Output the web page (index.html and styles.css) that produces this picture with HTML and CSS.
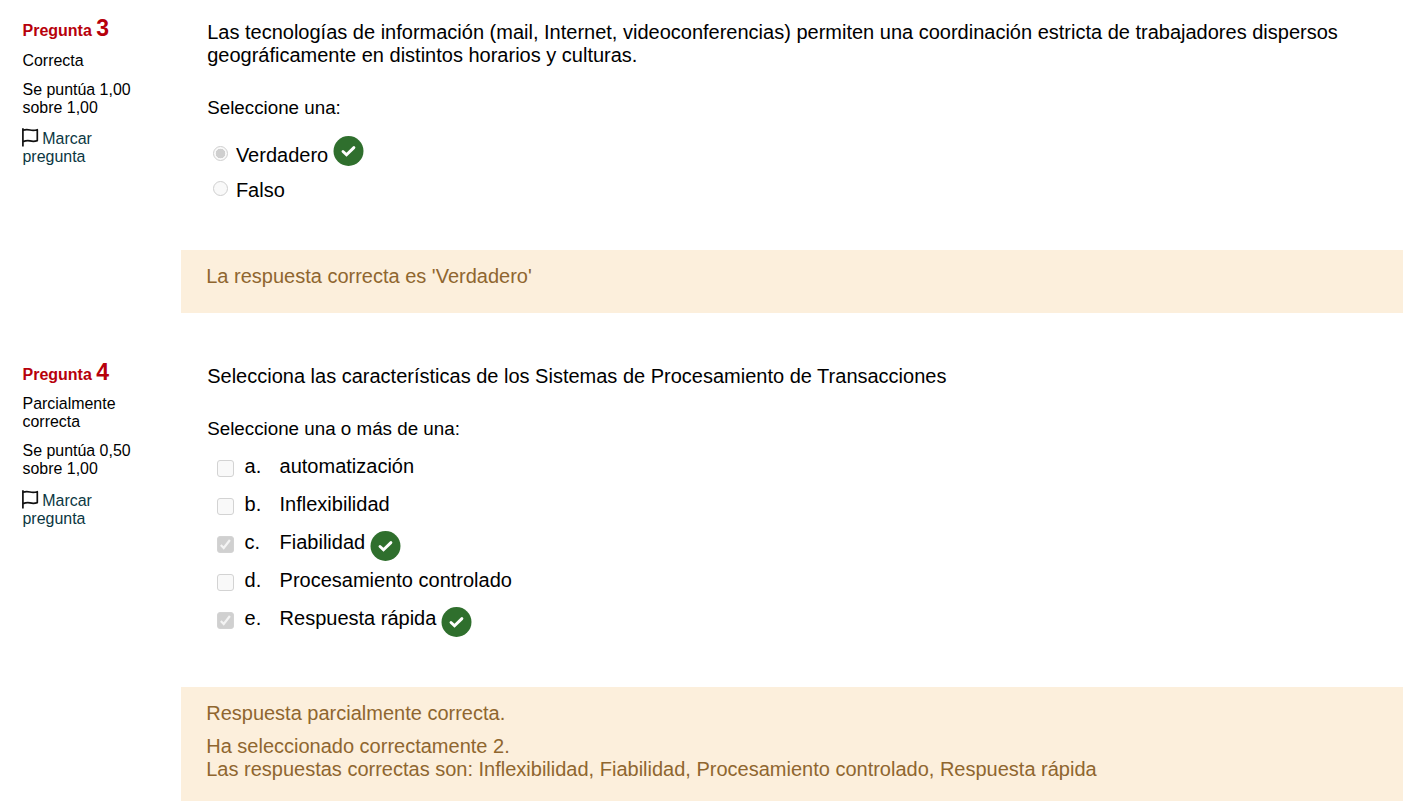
FILE: index.html
```html
<!DOCTYPE html>
<html lang="es">
<head>
<meta charset="utf-8">
<title>Cuestionario</title>
<link rel="stylesheet" href="styles.css">
</head>
<body>
<svg class="defs" width="0" height="0" aria-hidden="true">
  <symbol id="flag" viewBox="0 0 17 19"><path d="M.9 .3V18.4M1 2.3C3.5 1.3 5.6 1.4 8 2S13 2.5 15.3 1.7V12.6C12.8 13.6 10.6 13.6 8 12.9S3.4 12.7 1 13.6" fill="none" stroke="#111" stroke-width="1.7" stroke-linejoin="round"/></symbol>
  <symbol id="ok" viewBox="0 0 31 31"><circle cx="15.5" cy="15" r="15" fill="#2f6f2d"/><path d="M10 15.5l3.5 3.3 7.4-7.2" fill="none" stroke="#fff" stroke-width="2.9" stroke-linecap="round" stroke-linejoin="miter"/></symbol>
</svg>
<main class="quiz">
  <section class="question">
    <aside class="info">
      <h3 class="title">Pregunta <span class="number">3</span></h3>
      <p class="state single">Correcta</p>
      <p class="grade">Se puntúa 1,00<br>sobre 1,00</p>
      <a class="mark"><svg class="flag"><use href="#flag"/></svg>Marcar<br>pregunta</a>
    </aside>
    <div class="content">
      <div class="formulation">
        <p class="text">Las tecnologías de información (mail, Internet, videoconferencias) permiten una coordinación estricta de trabajadores dispersos<br>geográficamente en distintos horarios y culturas.</p>
        <p class="prompt">Seleccione una:</p>
        <div class="choices">
          <div class="choice"><span class="radio checked"></span><span>Verdadero</span><svg class="ok"><use href="#ok"/></svg></div>
          <div class="choice"><span class="radio"></span><span>Falso</span></div>
        </div>
      </div>
      <div class="feedback short"><p>La respuesta correcta es 'Verdadero'</p></div>
    </div>
  </section>
  <section class="question">
    <aside class="info">
      <h3 class="title">Pregunta <span class="number">4</span></h3>
      <p class="state">Parcialmente<br>correcta</p>
      <p class="grade">Se puntúa 0,50<br>sobre 1,00</p>
      <a class="mark later"><svg class="flag"><use href="#flag"/></svg>Marcar<br>pregunta</a>
    </aside>
    <div class="content">
      <div class="formulation multi">
        <p class="text">Selecciona las características de los Sistemas de Procesamiento de Transacciones</p>
        <p class="prompt">Seleccione una o más de una:</p>
        <div class="options">
          <div class="option"><span class="box"></span><span class="letter">a.</span><span>automatización</span></div>
          <div class="option"><span class="box"></span><span class="letter">b.</span><span>Inflexibilidad</span></div>
          <div class="option"><span class="box checked"><svg viewBox="0 0 15 15"><path d="M2.8 8l2.9 3 6.2-8"/></svg></span><span class="letter">c.</span><span>Fiabilidad</span><svg class="ok"><use href="#ok"/></svg></div>
          <div class="option"><span class="box"></span><span class="letter">d.</span><span>Procesamiento controlado</span></div>
          <div class="option"><span class="box checked"><svg viewBox="0 0 15 15"><path d="M2.8 8l2.9 3 6.2-8"/></svg></span><span class="letter">e.</span><span>Respuesta rápida</span><svg class="ok"><use href="#ok"/></svg></div>
        </div>
      </div>
      <div class="feedback long">
        <p>Respuesta parcialmente correcta.</p>
        <p>Ha seleccionado correctamente 2.<br>Las respuestas correctas son: Inflexibilidad, Fiabilidad, Procesamiento controlado, Respuesta rápida</p>
      </div>
    </div>
  </section>
</main>
</body>
</html>
```
FILE: styles.css
```css
* { box-sizing: border-box; }
body {
  margin: 0;
  height: 801px;
  overflow: hidden;
  background: #fff;
  color: #000;
  font: 20px/23px "Liberation Sans", Arial, sans-serif;
}
p, h3 { margin: 0; white-space: nowrap; }
.defs { display: block; height: 0; }
.quiz { padding: 0 13px 0 22px; }
.question { display: flex; height: 344px; }
.question + .question { height: 457px; }

.info { width: 159px; padding: 16px 0 0 0.5px; font-size: 15.95px; line-height: 18px; }
.title { height: 24px; line-height: 24px; font-size: 16px; font-weight: 700; color: #b7000b; }
.number { font-size: 23px; }
.state { margin-top: 11px; }
.single { margin-top: 12px; }
.grade { margin-top: 11px; }
.mark { display: block; margin-top: 13px; color: #0b3742; }
.later { margin-top: 14px; }
.flag { width: 17px; height: 19px; margin: -4px 3.3px -2px -0.5px; vertical-align: -1px; }

.content { flex: 1; }
.formulation { height: 249.5px; padding: 21px 0 0 26.2px; }
.multi { height: 342.5px; }
.prompt { margin-top: 29px; font-size: 18.8px; }
.choices { margin-top: 17px; }
.choice { display: flex; height: 35px; padding: 8px 0 0 5.7px; }
.radio {
  width: 15px; height: 15px; margin: 1.6px 8px 0 0;
  border: 1px solid #cfcfcf; border-radius: 50%; background: #f9f9f9;
}
.radio.checked { background: radial-gradient(circle, #cfcfcf 0 4.5px, #f9f9f9 5.1px); }
.ok { width: 31px; height: 31px; flex: none; margin-left: 4.6px; }
.choice .ok { margin-top: -8px; }

.options { margin-top: 15px; }
.option { display: flex; height: 38px; padding-left: 10.2px; }
.box {
  width: 17px; height: 17px; margin: 5px 10.2px 0 0;
  border: 1px solid #d3d3d3; border-radius: 3px; background: #f9f9f9;
}
.box.checked { background: #d0d0d0; }
.box svg { display: block; width: 15px; height: 15px; }
.box path { fill: none; stroke: #f4f4f4; stroke-width: 2.2; }
.letter { width: 35px; }

.feedback { padding: 15.5px 25px 0 25.2px; background: #fcefdc; color: #8f662f; }
.feedback p + p { margin-top: 10px; }
.short { height: 63px; }
.long { height: 115px; }
```
